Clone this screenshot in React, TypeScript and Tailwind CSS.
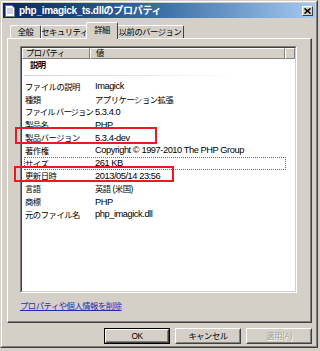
import React from "react";

// [label, value, value is latin]
const rows: [string, string, boolean][] = [
  ["ファイルの説明", "Imagick", true],
  ["種類", "アプリケーション拡張", false],
  ["ファイル バージョン", "5.3.4.0", true],
  ["製品名", "PHP", true],
  ["製品バージョン", "5.3.4-dev", true],
  ["著作権", "Copyright © 1997-2010 The PHP Group", true],
  ["サイズ", "261 KB", true],
  ["更新日時", "2013/05/14 23:56", true],
  ["言語", "英語 (米国)", false],
  ["商標", "PHP", true],
  ["元のファイル名", "php_imagick.dll", true],
];

const tabs = [
  { name: "全般", w: "w-[31px]" },
  { name: "セキュリティ", w: "w-[47px]" },
  { name: "詳細", w: "w-[32px]", active: true },
  { name: "以前のバージョン", w: "w-[68px]" },
];

function FileIcon() {
  return (
    <svg width="10" height="12" viewBox="0 0 10 12" className="shrink-0">
      <path d="M0.5 0.5 H7 L9.5 3 V11.5 H0.5 Z" fill="#fff" stroke="#7a7a7a" />
      <path d="M2 4 H8 M2 6 H8 M2 8 H8" stroke="#9aa4c8" strokeWidth="1" />
    </svg>
  );
}

function Button({ label, disabled, isDefault }: { label: string; disabled?: boolean; isDefault?: boolean }) {
  return (
    <div className={`w-[66px] h-[16px] ${isDefault ? "border border-black" : ""}`}>
      <div className="h-full border border-t-white border-l-white border-r-[#404040] border-b-[#404040]">
        <div className="h-full flex items-center justify-center border border-t-[#d4d0c8] border-l-[#d4d0c8] border-r-[#808080] border-b-[#808080]">
          <span className={disabled ? "text-[#a09c94] [text-shadow:1px_1px_0_#fff]" : "text-black"}>{label}</span>
        </div>
      </div>
    </div>
  );
}

export default function App() {
  return (
    <div
      className="relative w-[320px] h-[351px] bg-[#d4d0c8] text-[8.3px] tracking-[-0.45px] leading-none text-black overflow-hidden"
      style={{ fontFamily: '"Liberation Sans", "Noto Sans CJK JP", sans-serif' }}
    >
      {/* window frame */}
      <div className="w-[318px] h-[348px] border border-t-[#d4d0c8] border-l-[#d4d0c8] border-r-[#404040] border-b-[#404040]">
        <div className="h-full flex flex-col border border-t-white border-l-white border-r-[#808080] border-b-[#808080] p-px">
          {/* title bar */}
          <div className="h-[15px] flex items-center gap-[4px] pl-[2px] pr-[2px] bg-gradient-to-r from-[#0a246a] via-[#3a6ea5] to-[#a6caf0]">
            <FileIcon />
            <span className="flex-1 text-white font-bold text-[10px] tracking-[-0.3px] whitespace-nowrap">php_imagick_ts.dllのプロパティ</span>
            <div className="w-[11px] h-[10px] bg-[#d4d0c8] border border-t-white border-l-white border-r-[#404040] border-b-[#404040] flex items-center justify-center">
              <svg width="7" height="6" viewBox="0 0 7 6">
                <path d="M0.5 0.5 L6.5 5.5 M6.5 0.5 L0.5 5.5" stroke="#000" strokeWidth="1.6" />
              </svg>
            </div>
          </div>

          {/* tabs */}
          <div className="mt-[4px] ml-[4px] pl-[3px] h-[16px] flex items-end">
            {tabs.map((t) => (
              <div
                key={t.name}
                className={`${t.w} shrink-0 flex items-center justify-center whitespace-nowrap rounded-t-[2px] border-t border-l border-r border-t-white border-l-white border-r-[#404040] bg-[#d4d0c8] ${
                  t.active ? "h-[17px] -mx-[2px] relative z-10 -mb-px" : "h-[13px]"
                }`}
              >
                <span className={t.active ? "pb-[2px]" : ""}>{t.name}</span>
              </div>
            ))}
          </div>

          {/* tab panel */}
          <div className="ml-[4px] w-[305px] h-[285px] border border-t-white border-l-white border-r-[#404040] border-b-[#404040]">
            <div className="h-full border-r border-b border-r-[#808080] border-b-[#808080] pl-[12px] pt-[7px]">
              {/* list view */}
              <div className="w-[277px] h-[247px] border border-t-[#808080] border-l-[#808080] border-r-white border-b-white">
                <div className="h-full bg-white border border-t-[#404040] border-l-[#404040] border-r-[#d4d0c8] border-b-[#d4d0c8]">
                  {/* header */}
                  <div className="flex h-[11px] bg-[#d4d0c8]">
                    <div className="w-[68px] flex items-center pl-[3px] border border-t-white border-l-white border-r-[#808080] border-b-[#808080]">
                      プロパティ
                    </div>
                    <div className="w-[195px] flex items-center pl-[5px] border border-t-white border-l-white border-r-[#808080] border-b-[#808080]">
                      値
                    </div>
                    <div className="flex-1 border border-t-white border-l-white border-r-[#808080] border-b-[#808080]" />
                  </div>
                  {/* group */}
                  <div className="h-[13px] flex items-center pl-[8px] font-bold">説明</div>
                  <div className="mt-[3px] ml-[2px] w-[216px] h-px bg-gradient-to-r from-[#c8d0e4] to-white" />
                  <div className="h-[4.6px]" />
                  {rows.map(([label, value, latin], i) => (
                    <div
                      key={label}
                      className={`ml-[2px] w-[262px] h-[12.8px] flex items-center border border-dotted ${
                        i === 6 ? "border-[#6b6b6b]" : "border-transparent"
                      }`}
                    >
                      <span className={`w-[70px] shrink-0 whitespace-nowrap ${i === 2 ? "tracking-[-0.9px]" : ""}`}>{label}</span>
                      <span className={`whitespace-nowrap ${latin ? "text-[9.3px]" : ""}`}>{value}</span>
                    </div>
                  ))}
                </div>
              </div>
              <div className="mt-[9px] text-[#1f2fb0] underline">プロパティや個人情報を削除</div>
            </div>
          </div>

          {/* buttons */}
          <div className="mt-[5px] w-[309px] flex justify-end gap-[5px]">
            <Button label="OK" isDefault />
            <Button label="キャンセル" />
            <Button label="適用(A)" disabled />
          </div>
        </div>
      </div>

      {/* annotation boxes */}
      <div className="absolute left-[15px] top-[127px] w-[142px] h-[17px] border-2 border-[#f01820]" />
      <div className="absolute left-[14px] top-[166px] w-[160px] h-[16px] border-2 border-[#f01820]" />
    </div>
  );
}
